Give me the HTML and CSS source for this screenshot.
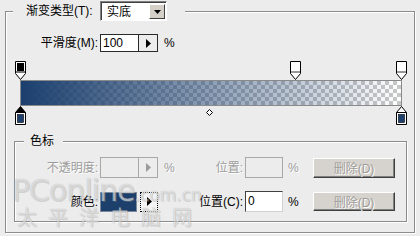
FILE: index.html
```html
<!DOCTYPE html>
<html>
<head>
<meta charset="utf-8">
<link rel="stylesheet" href="styles.css">
</head>
<body>
<div class="panel">
  <div class="legend">
    <span class="legend-text">渐变类型(T):</span>
    <div class="select">
      <span class="select-value">实底</span>
      <span class="select-btn"><svg width="7" height="4" viewBox="0 0 7 4"><path d="M0 0H7L3.5 4Z" fill="#000"/></svg></span>
    </div>
  </div>

  <div class="row-smooth">
    <span class="lbl lbl-smooth">平滑度(M):</span>
    <div class="spin">
      <span class="spin-val">100</span>
      <span class="spin-btn"><svg width="5" height="9" viewBox="0 0 5 9"><path d="M0 0L5 4.5L0 9Z" fill="#000"/></svg></span>
    </div>
    <span class="pct">%</span>
  </div>

  <div class="ramp">
    <div class="stop-top stop-a">
      <svg width="11" height="19" viewBox="0 0 11 19"><path d="M0.5 0.5H10.5V12.5L5.5 18.5L0.5 12.5Z" fill="#fff" stroke="#000"/><rect x="2" y="2" width="7" height="9" fill="#000"/><rect x="1" y="10" width="9" height="2" fill="#777"/></svg>
    </div>
    <div class="stop-top stop-b">
      <svg width="11" height="19" viewBox="0 0 11 19"><path d="M0.5 0.5H10.5V12.5L5.5 18.5L0.5 12.5Z" fill="#fff" stroke="#000"/><rect x="1" y="10" width="9" height="2" fill="#999"/></svg>
    </div>
    <div class="stop-top stop-c">
      <svg width="11" height="19" viewBox="0 0 11 19"><path d="M0.5 0.5H10.5V12.5L5.5 18.5L0.5 12.5Z" fill="#fff" stroke="#000"/><rect x="1" y="10" width="9" height="2" fill="#999"/></svg>
    </div>
    <div class="bar"></div>
    <div class="mid">
      <svg width="7" height="7" viewBox="0 0 7 7"><path d="M3.5 0.5L6.5 3.5L3.5 6.5L0.5 3.5Z" fill="#fff" stroke="#000"/></svg>
    </div>
    <div class="stop-bot stop-a">
      <svg width="11" height="19" viewBox="0 0 11 19"><path d="M5.5 0.5L10.5 6.5V18.5H0.5V6.5Z" fill="#000" stroke="#000"/><rect x="1" y="7" width="9" height="11" fill="#fff"/><rect x="2.5" y="8.5" width="6" height="8" fill="#1c3f6c" stroke="#000" stroke-width="0.6"/></svg>
    </div>
    <div class="stop-bot stop-c">
      <svg width="11" height="19" viewBox="0 0 11 19"><path d="M5.5 0.5L10.5 6.5V18.5H0.5V6.5Z" fill="#fff" stroke="#000"/><path d="M0.5 6.5H10.5" stroke="#000"/><rect x="2.5" y="8.5" width="6" height="8" fill="#1c3f6c" stroke="#000" stroke-width="0.6"/></svg>
    </div>
  </div>

  <div class="group">
    <div class="group-legend"><span class="group-title">色标</span></div>

    <div class="grow grow-a">
      <span class="lbl lbl-col dis">不透明度:</span>
      <div class="spin spin-dis">
        <span class="spin-val"></span>
        <span class="spin-btn"><svg width="5" height="9" viewBox="0 0 5 9"><path d="M0 0L5 4.5L0 9Z" fill="#9a9a9a"/></svg></span>
      </div>
      <span class="pct pct-a dis">%</span>
      <span class="lbl lbl-pos dis">位置:</span>
      <span class="field field-dis"></span>
      <span class="pct pct-b dis">%</span>
      <span class="btn">删除(D)</span>
    </div>

    <div class="grow grow-b">
      <span class="lbl lbl-col">颜色:</span>
      <div class="colorpick">
        <span class="swatch"></span>
        <span class="cbtn"><svg width="5" height="9" viewBox="0 0 5 9"><path d="M0 0L5 4.5L0 9Z" fill="#000"/></svg></span>
      </div>
      <span class="gap-a"></span>
      <span class="lbl lbl-pos">位置(C):</span>
      <span class="field">0</span>
      <span class="pct pct-b">%</span>
      <span class="btn btn-b">删除(D)</span>
    </div>
  </div>

  <div class="watermark">
    <div class="wm-top"><span class="wm-big">PConline</span><span class="wm-small">.com.cn</span></div>
    <div class="wm-cn">太平洋电脑网</div>
  </div>
</div>
</body>
</html>
```

FILE: styles.css
```css
* { box-sizing: border-box; }

html, body {
  margin: 0;
  padding: 0;
}

body {
  width: 420px;
  height: 236px;
  overflow: hidden;
  background: #ececec;
  font-family: "Liberation Sans", "Noto Sans CJK SC", sans-serif;
  font-size: 12px;
  color: #000;
  padding-top: 11px;
}

.panel {
  position: relative;
  margin: 0 5px 0 5px;
  height: 222px;
  border: 1px solid #8c8c8c;
  box-shadow: inset 1px 1px 0 #fff, 1px 1px 0 #fff;
}

/* ---- top legend ---- */
.legend {
  display: flex;
  align-items: center;
  height: 20px;
  margin-top: -11px;
  margin-left: 7px;
  padding: 0 18px 0 13px;
  background: #ececec;
  width: max-content;
}

.legend-text {
  width: 74px;
  line-height: 14px;
  white-space: nowrap;
}

.select {
  display: flex;
  width: 67px;
  height: 20px;
  border: 1px solid;
  border-color: #808080 #fff #fff #808080;
  box-shadow: inset 1px 1px 0 #404040;
  background: #fff;
}

.select-value {
  flex: 1;
  padding: 3px 0 0 6px;
  line-height: 14px;
}

.select-btn {
  width: 16px;
  margin: 2px 1px 1px 0;
  display: flex;
  align-items: center;
  justify-content: center;
  background: #d4d0c8;
  border: 1px solid;
  border-color: #fff #404040 #404040 #fff;
}

/* ---- smooth row ---- */
.row-smooth {
  display: flex;
  align-items: center;
  height: 18px;
  margin-top: 13px;
}

.lbl {
  text-align: right;
  white-space: nowrap;
  line-height: 14px;
}

.lbl-smooth {
  width: 92px;
  margin-right: 2px;
}

.spin {
  display: flex;
  width: 58px;
  height: 18px;
  border: 1px solid #2a2a2a;
  background: #fff;
}

.spin-val {
  width: 38px;
  border-right: 1px solid #2a2a2a;
  padding-left: 2px;
  line-height: 16px;
}

.spin-btn {
  flex: 1;
  display: flex;
  align-items: center;
  justify-content: center;
  background: #ececec;
}

.pct {
  margin-left: 6px;
}

/* ---- gradient ramp ---- */
.ramp {
  position: relative;
  width: 382px;
  height: 64px;
  margin: 9px 0 0 14px;
}

.bar {
  position: relative;
  top: 19px;
  height: 26px;
  border: 1px solid #8a8a8a;
  background:
    linear-gradient(to right, rgba(27, 63, 110, 1), rgba(27, 63, 110, 0)),
    repeating-conic-gradient(#c8c8c8 0 25%, #fff 0 50%) 0 0 / 8px 8px;
}

.stop-top,
.stop-bot {
  position: absolute;
  width: 11px;
  height: 19px;
  line-height: 0;
}

.stop-top { top: 0; }
.stop-bot { top: 45px; }

.stop-a { left: -5px; }
.stop-b { left: 270px; }
.stop-c { left: 376px; }

.mid {
  position: absolute;
  top: 48px;
  left: 186px;
  line-height: 0;
}

/* ---- color stop group ---- */
.group {
  margin: 16px 7px 0 8px;
  height: 81px;
  border: 1px solid #8c8c8c;
  box-shadow: inset 1px 1px 0 #fff, 1px 1px 0 #fff;
}

.group-legend {
  display: flex;
  height: 14px;
  margin-top: -8px;
}

.group-title {
  margin-left: 9px;
  padding: 0 9px 0 6px;
  background: #ececec;
  line-height: 14px;
}

.grow {
  display: flex;
  align-items: center;
  height: 21px;
}

.grow-a { margin-top: 9px; }
.grow-b { margin-top: 13px; }

.lbl-col {
  width: 83px;
  margin-right: 2px;
}

.lbl-pos {
  width: 55px;
  margin-right: 2px;
}

.pct-a { width: 24px; }
.gap-a { width: 30px; }
.pct-b { width: 25px; margin-left: 5px; }

.dis {
  color: #9c9c9c;
  text-shadow: 1px 1px 0 #fff;
}

.spin-dis {
  height: 21px;
  border-color: #a8a8a8;
  background: #ececec;
}

.spin-dis .spin-val {
  border-right-color: #a8a8a8;
}

.field {
  width: 38px;
  height: 21px;
  border: 1px solid;
  border-color: #404040 #d0d0d0 #d0d0d0 #404040;
  background: #fff;
  padding-left: 2px;
  line-height: 19px;
}

.field-dis {
  border-color: #a8a8a8;
  background: #ececec;
}

.colorpick {
  display: flex;
  width: 58px;
  height: 20px;
  gap: 3px;
}

.swatch {
  width: 37px;
  height: 20px;
  background: #1c3f6c;
  border: 1px solid #7b8a9a;
}

.cbtn {
  flex: 1;
  display: flex;
  align-items: center;
  justify-content: center;
  border: 1px dotted #000;
  background: #f4f4f4;
}

.btn {
  width: 82px;
  height: 20px;
  display: flex;
  align-items: center;
  justify-content: center;
  background: #d6d3ce;
  border: 1px solid;
  border-color: #fff #404040 #404040 #fff;
  box-shadow: inset -1px -1px 0 #808080;
  color: #a09d98;
  text-shadow: 1px 1px 0 #fff;
}

.btn-b { height: 19px; }

/* ---- watermark overlay ---- */
.watermark {
  position: absolute;
  left: 6px;
  top: 164px;
  pointer-events: none;
  color: rgba(255, 255, 255, 0.55);
  text-shadow: 0 0 1px rgba(90, 90, 90, 0.4), 1px 1px 0 rgba(160, 160, 160, 0.3);
  font-family: "DejaVu Sans", "Noto Sans CJK SC", sans-serif;
}

.wm-top {
  display: flex;
  align-items: baseline;
  white-space: nowrap;
}

.wm-big {
  font-size: 30px;
  line-height: 30px;
  letter-spacing: -1px;
}

.wm-small {
  font-size: 17px;
}

.wm-cn {
  margin-top: -2px;
  margin-left: 5px;
  font-family: "Noto Sans CJK SC", sans-serif;
  font-size: 20px;
  line-height: 26px;
  letter-spacing: 11px;
  white-space: nowrap;
}
```
